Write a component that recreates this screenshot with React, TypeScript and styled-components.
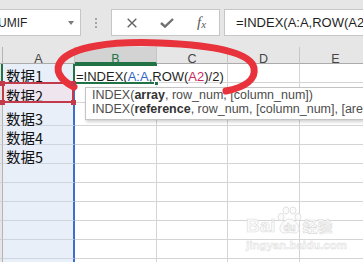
import React from "react";
import styled, { createGlobalStyle, css } from "styled-components";

const Global = createGlobalStyle`
  html, body { margin: 0; padding: 0; background: #fff; }
  body { font-family: "Liberation Sans", Arial, sans-serif; }
  #root { width: 363px; height: 262px; overflow: hidden; }
`;

const Page = styled.div`
  position: relative;
  width: 363px;
  height: 262px;
  overflow: hidden;
  background: #fff;
`;

/* ---------- formula bar ---------- */
const FormulaBar = styled.div`
  display: flex;
  align-items: flex-start;
  height: 47px;
  padding-top: 9px;
  box-sizing: border-box;
  background: #e6e6e6;
`;

const NameBox = styled.div`
  display: flex;
  align-items: center;
  justify-content: space-between;
  flex: none;
  margin-left: -12px;
  width: 93px;
  height: 27px;
  box-sizing: border-box;
  padding: 0 6px 0 1px;
  background: #fff;
  border: 1px solid #c6c6c6;
  font-size: 12px;
  color: #1f1f1f;
`;

const Caret = styled.span`
  width: 0;
  height: 0;
  border-left: 3px solid transparent;
  border-right: 3px solid transparent;
  border-top: 4px solid #7a7a7a;
`;

const Grip = styled.div`
  display: flex;
  flex-direction: column;
  gap: 2px;
  flex: none;
  margin: 9px 0 0 14px;
`;

const Dot = styled.span`
  width: 2px;
  height: 2px;
  background: #a4a4a4;
`;

const ButtonGroup = styled.div`
  display: flex;
  flex: none;
  margin-left: 14px;
  width: 109px;
  height: 27px;
  box-sizing: border-box;
  padding-left: 2px;
  background: #fff;
  border: 1px solid #c6c6c6;
`;

const IconBtn = styled.span`
  display: flex;
  align-items: center;
  justify-content: center;
  width: 36px;
  height: 25px;
  color: #666;
`;

const Fx = styled.span`
  font-family: "Liberation Serif", serif;
  font-style: italic;
  font-size: 15px;
  color: #5a5a5a;
  & > small {
    font-size: 11px;
    position: relative;
    top: 1px;
  }
`;

const FormulaInput = styled.div`
  flex: 1;
  margin: 0 -20px 0 4px;
  height: 27px;
  box-sizing: border-box;
  padding-left: 11px;
  background: #fff;
  border: 1px solid #c6c6c6;
  font-size: 13px;
  line-height: 25px;
  color: #1f1f1f;
  white-space: nowrap;
  overflow: hidden;
`;

/* ---------- sheet ---------- */
const Sheet = styled.div`
  display: grid;
  grid-template-columns: 3px 72px 82px 71px 72px 72px;
  grid-template-rows: 17px 19px 20px 23px repeat(8, 19px);
  background: #fff;
`;

const HeaderCorner = styled.div`
  box-sizing: border-box;
  background: #e6e6e6;
  border-right: 1px solid #b4b4b4;
  border-bottom: 1px solid #ababab;
`;

const HeaderCell = styled.div<{ $active?: boolean }>`
  box-sizing: border-box;
  display: flex;
  justify-content: center;
  padding-top: 7px;
  background: #e6e6e6;
  border-right: 1px solid #c6c6c6;
  border-bottom: 1px solid #ababab;
  font-size: 12.5px;
  line-height: 10px;
  color: #444;
  ${(p) =>
    p.$active &&
    css`
      background: #d3d3d3;
      color: #217346;
      border-bottom: 2px solid #217346;
    `}
`;

const RowHead = styled.div<{ $active?: boolean }>`
  box-sizing: border-box;
  background: #e6e6e6;
  border-right: 1px solid #b4b4b4;
  border-bottom: 1px solid #d0d0d0;
  ${(p) =>
    p.$active &&
    css`
      border-right: 2px solid #217346;
    `}
`;

const ACell = styled.div<{ $ref?: boolean }>`
  position: relative;
  box-sizing: border-box;
  display: flex;
  align-items: flex-end;
  padding-left: 3px;
  background: ${(p) => (p.$ref ? "#efe5ee" : "#e8eff9")};
  border-right: 2px solid #3c6ed0;
  border-bottom: 1px solid #cfd5de;
  font-family: "Noto Sans CJK SC", "Liberation Sans", sans-serif;
  font-size: 14.5px;
  line-height: 12px;
  color: #111;
  white-space: nowrap;
  ${(p) =>
    p.$ref &&
    css`
      &::after {
        content: "";
        position: absolute;
        left: -1px;
        top: -1px;
        right: -1px;
        bottom: -1px;
        border: 2px solid #c33a4b;
        pointer-events: none;
      }
    `}
`;

const Handle = styled.span<{ $h: "left" | "right"; $v: "top" | "bottom" }>`
  position: absolute;
  z-index: 2;
  width: 5px;
  height: 5px;
  background: #c33a4b;
  ${(p) => (p.$h === "left" ? "left: -3px;" : "right: -3px;")}
  ${(p) => (p.$v === "top" ? "top: -2px;" : "bottom: -3px;")}
`;

const Cell = styled.div`
  box-sizing: border-box;
  background: #fff;
  border-right: 1px solid #d4d4d4;
  border-bottom: 1px solid #d4d4d4;
`;

const EditCell = styled.div`
  position: relative;
  grid-column: span 2;
  box-sizing: border-box;
  padding: 5px 0 0 1px;
  background: #fff;
  border-right: 1px solid #d4d4d4;
  border-bottom: 1px solid #d4d4d4;
  font-size: 13px;
  line-height: 15px;
  color: #1f1f1f;
  white-space: nowrap;
  &::before {
    content: "";
    position: absolute;
    left: -2px;
    top: 0;
    width: 84px;
    height: 20px;
    box-sizing: border-box;
    border: 2px solid #217346;
    border-right: none;
    pointer-events: none;
  }
`;

const FillHandle = styled.span`
  position: absolute;
  left: 79px;
  top: 17px;
  width: 5px;
  height: 5px;
  box-sizing: border-box;
  background: #217346;
  border: 1px solid #fff;
`;

const Ref = styled.span<{ $c: "blue" | "red" }>`
  color: ${(p) => (p.$c === "blue" ? "#3264c8" : "#c8285a")};
`;

/* ---------- overlays ---------- */
const Tooltip = styled.div`
  position: absolute;
  left: 85px;
  top: 87px;
  width: 300px;
  height: 33px;
  box-sizing: border-box;
  padding-left: 6px;
  background: #fff;
  border: 1px solid #c4c4c4;
  box-shadow: 1px 2px 3px rgba(0, 0, 0, 0.18);
  font-size: 12.5px;
  line-height: 14px;
  color: #4d4d4d;
  white-space: nowrap;
  & b {
    color: #333;
  }
`;

const Annotation = styled.svg`
  position: absolute;
  left: 0;
  top: 0;
  pointer-events: none;
`;

const Watermark = styled.div`
  position: absolute;
  left: 246px;
  top: 206px;
  display: flex;
  flex-direction: column;
  align-items: flex-start;
  pointer-events: none;
`;

const WmTop = styled.div`
  display: flex;
  align-items: flex-end;
`;

const WmLatin = styled.span`
  font-family: "Liberation Sans", sans-serif;
  font-weight: bold;
  font-size: 19px;
  line-height: 18px;
  color: #fbfbfb;
  -webkit-text-stroke: 0.6px #dcdcdc;
`;

const WmCjk = styled.span`
  font-family: "Noto Sans CJK SC", sans-serif;
  font-weight: bold;
  font-size: 15px;
  line-height: 18px;
  color: #fbfbfb;
  -webkit-text-stroke: 0.6px #dcdcdc;
`;

const WmUrl = styled.span`
  margin-top: 4px;
  font-family: "Liberation Sans", sans-serif;
  font-weight: bold;
  font-size: 11.5px;
  line-height: 12px;
  color: #fbfbfb;
  -webkit-text-stroke: 0.5px #dedede;
`;

const rows = ["数据1", "数据2", "数据3", "数据4", "数据5", "", "", "", "", "", ""];

export default function App() {
  return (
    <Page>
      <Global />
      <FormulaBar>
        <NameBox>
          <span>SUMIF</span>
          <Caret />
        </NameBox>
        <Grip>
          <Dot />
          <Dot />
          <Dot />
        </Grip>
        <ButtonGroup>
          <IconBtn>
            <svg width="10" height="10" viewBox="0 0 10 10">
              <path d="M0.7 0.7 L9.3 9.3 M9.3 0.7 L0.7 9.3" stroke="#646464" strokeWidth="1.4" fill="none" />
            </svg>
          </IconBtn>
          <IconBtn>
            <svg width="14" height="10" viewBox="0 0 14 10">
              <path d="M1 5 L5 8.6 L13 1" stroke="#707070" strokeWidth="2.4" fill="none" />
            </svg>
          </IconBtn>
          <IconBtn>
            <Fx>
              f<small>x</small>
            </Fx>
          </IconBtn>
        </ButtonGroup>
        <FormulaInput>=INDEX(A:A,ROW(A2)/2)</FormulaInput>
      </FormulaBar>

      <Sheet>
        <HeaderCorner />
        <HeaderCell>A</HeaderCell>
        <HeaderCell $active>B</HeaderCell>
        <HeaderCell>C</HeaderCell>
        <HeaderCell>D</HeaderCell>
        <HeaderCell>E</HeaderCell>

        <RowHead $active />
        <ACell>{rows[0]}</ACell>
        <EditCell>
          =INDEX(<Ref $c="blue">A:A</Ref>,ROW(<Ref $c="red">A2</Ref>)/2)
          <FillHandle />
        </EditCell>
        <Cell />
        <Cell />

        <RowHead />
        <ACell $ref>
          {rows[1]}
          <Handle $h="left" $v="top" />
          <Handle $h="right" $v="top" />
          <Handle $h="left" $v="bottom" />
          <Handle $h="right" $v="bottom" />
        </ACell>
        <Cell />
        <Cell />
        <Cell />
        <Cell />

        {rows.slice(2).map((t, i) => (
          <React.Fragment key={i}>
            <RowHead />
            <ACell>{t}</ACell>
            <Cell />
            <Cell />
            <Cell />
            <Cell />
          </React.Fragment>
        ))}
      </Sheet>

      <Tooltip>
        <div>
          INDEX(<b>array</b>, row_num, [column_num])
        </div>
        <div>
          INDEX(<b>reference</b>, row_num, [column_num], [area_num])
        </div>
      </Tooltip>

      <Watermark>
        <WmTop>
          <WmLatin>Bai</WmLatin>
          <svg width="27" height="29" viewBox="0 0 27 29">
            <g fill="#fbfbfb" stroke="#dadada" strokeWidth="0.8">
              <ellipse cx="5" cy="11" rx="3" ry="3.6" />
              <ellipse cx="10" cy="4.5" rx="3" ry="3.6" />
              <ellipse cx="17" cy="4.5" rx="3" ry="3.6" />
              <ellipse cx="22" cy="11" rx="3" ry="3.6" />
              <path d="M13.5 13 C8 13 3 20 4 24 C5 28 10 27 13.5 26.5 C17 27 22 28 23 24 C24 20 19 13 13.5 13 Z" />
            </g>
            <text x="13.5" y="25" textAnchor="middle" fontFamily="Liberation Sans, sans-serif" fontWeight="bold" fontSize="10" fill="#fbfbfb" stroke="#d4d4d4" strokeWidth="0.5">
              du
            </text>
          </svg>
          <WmCjk>经验</WmCjk>
        </WmTop>
        <WmUrl>jingyan.baidu.com</WmUrl>
      </Watermark>

      <Annotation width="363" height="262" viewBox="0 0 363 262">
        <path
          d="M226 91 C246 87 256 79 254 68 C251 53 215 45 160 43 C110 41 72 47 61 61 C54 70 60 80 74 87"
          fill="none"
          stroke="#e8323c"
          strokeWidth="7"
          strokeLinecap="round"
        />
      </Annotation>
    </Page>
  );
}
